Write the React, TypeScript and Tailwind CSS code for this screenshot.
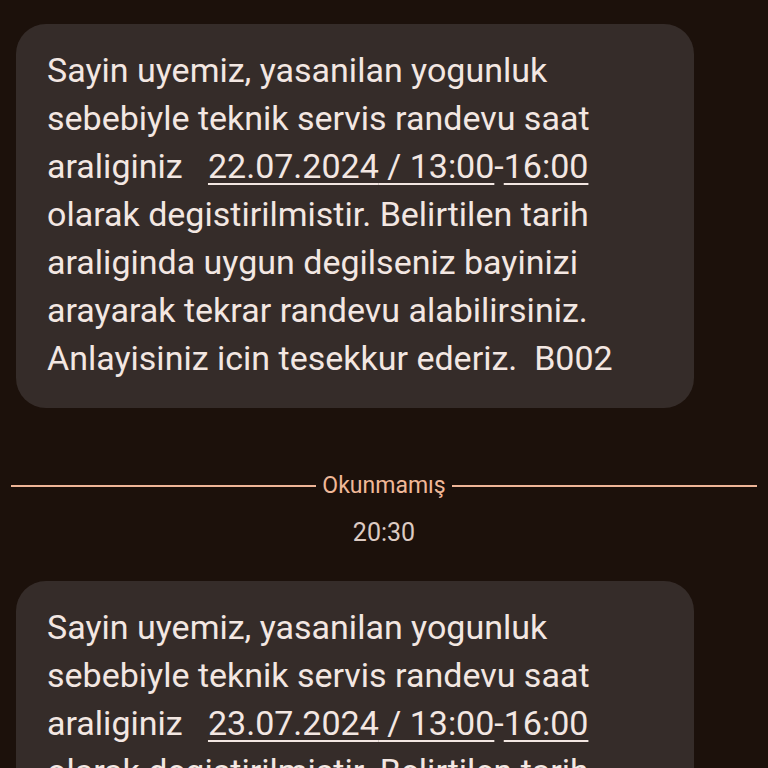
export default function App() {
  const font = { fontFamily: "Roboto, 'Noto Sans', sans-serif" };

  const Message = ({ date }: { date: string }) => (
    <div className="ml-4 w-[678px] rounded-[30px] bg-[#352c29] pl-[31px] pr-6 pt-[22px] pb-[26px]">
      <p className="text-[34px] leading-[48px] text-[#f3e7e2] whitespace-pre-wrap">
        Sayin uyemiz, yasanilan yogunluk{"\n"}sebebiyle teknik servis randevu saat{"\n"}araliginiz{"   "}
        <span className="underline decoration-2 underline-offset-[5px]">{date} / 13:00</span>-
        <span className="underline decoration-2 underline-offset-[5px]">16:00</span>
        {"\n"}olarak degistirilmistir. Belirtilen tarih{"\n"}araliginda uygun degilseniz bayinizi{"\n"}arayarak tekrar randevu alabilirsiniz.{"\n"}Anlayisiniz icin tesekkur ederiz.  B002
      </p>
    </div>
  );

  return (
    <div className="h-[768px] w-[768px] overflow-hidden bg-[#1c110b]" style={font}>
      <div className="pt-6">
        <Message date="22.07.2024" />

        <div className="mt-[64px] flex items-center gap-[6px] px-[11px]">
          <div className="h-[2px] flex-1 bg-[#eeb597]" />
          <span className="text-[23px] leading-7 text-[#f0b898]">Okunmamış</span>
          <div className="h-[2px] flex-1 bg-[#eeb597]" />
        </div>

        <div className="mt-[17px] text-center text-[25px] leading-8 text-[#dccbc3]">20:30</div>

        <div className="mt-[32px]">
          <Message date="23.07.2024" />
        </div>
      </div>
    </div>
  );
}
